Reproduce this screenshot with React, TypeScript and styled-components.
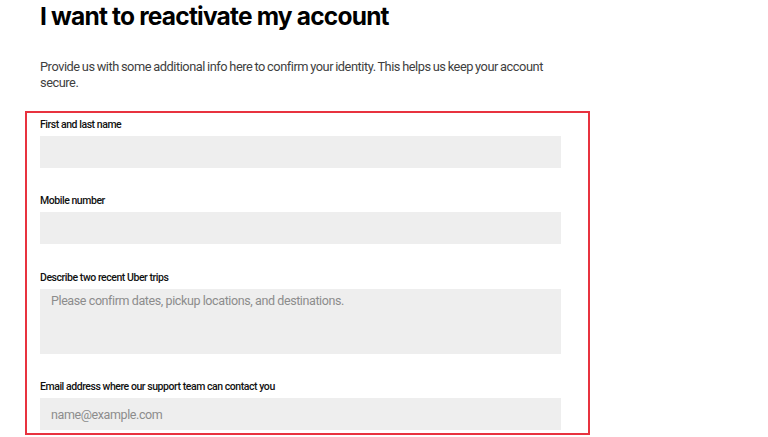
import React from 'react'
import styled, { createGlobalStyle } from 'styled-components'

const GlobalStyle = createGlobalStyle`
    html, body {
        margin: 0;
        padding: 0;
        background: #fff;
    }
    body {
        font-family: Roboto, 'Liberation Sans', sans-serif;
        color: #000;
    }
`

const Page = styled.main`
    width: 768px;
    height: 437px;
    overflow: hidden;
    box-sizing: border-box;
    padding: 0 0 0 25px;
`

const Intro = styled.div`
    padding-left: 15px;
    width: 521px;
`

const Title = styled.h1`
    margin: 0;
    padding-top: 1px;
    font-family: Inter, 'Liberation Sans', sans-serif;
    font-size: 24.5px;
    line-height: 30px;
    font-weight: 700;
    letter-spacing: -0.8px;
    color: #000;
`

const Lead = styled.p`
    margin: 28px 0 0;
    font-size: 12.8px;
    line-height: 16px;
    color: #3f3f3f;
    letter-spacing: -0.45px;
    word-spacing: -0.6px;
`

const Highlight = styled.form`
    margin-top: 20px;
    width: 565px;
    box-sizing: border-box;
    border: 2px solid #e8323f;
    padding: 5px 27px 3px 13px;
    display: flex;
    flex-direction: column;
    gap: 26px;
`

const Field = styled.label<{ $tall?: boolean }>`
    display: flex;
    flex-direction: column;
    gap: 4px;
    margin-top: ${p => (p.$tall ? 1 : 0)}px;
`

const Caption = styled.span`
    font-size: 10.5px;
    line-height: 14px;
    font-weight: 500;
    letter-spacing: -0.45px;
    color: #111;
`

const Input = styled.input`
    box-sizing: border-box;
    width: 521px;
    height: 32px;
    border: none;
    outline: none;
    background: #eeeeee;
    padding: 0 11px;
    font-family: inherit;
    font-size: 12.5px;
    letter-spacing: -0.4px;
    color: #000;

    &::placeholder {
        color: #8c8c8c;
    }
`

const TextArea = styled.textarea`
    box-sizing: border-box;
    width: 521px;
    height: 65px;
    border: none;
    outline: none;
    resize: none;
    background: #eeeeee;
    padding: 4px 11px;
    font-family: inherit;
    font-size: 12.5px;
    line-height: 16px;
    letter-spacing: -0.4px;
    color: #000;

    &::placeholder {
        color: #8c8c8c;
    }
`

const App = () => (
    <>
        <GlobalStyle />
        <Page>
            <Intro>
                <Title>I want to reactivate my account</Title>
                <Lead>
                    Provide us with some additional info here to confirm your identity. This helps us keep your
                    account secure.
                </Lead>
            </Intro>
            <Highlight onSubmit={e => e.preventDefault()}>
                <Field>
                    <Caption>First and last name</Caption>
                    <Input type='text' />
                </Field>
                <Field>
                    <Caption>Mobile number</Caption>
                    <Input type='tel' />
                </Field>
                <Field $tall>
                    <Caption>Describe two recent Uber trips</Caption>
                    <TextArea placeholder='Please confirm dates, pickup locations, and destinations.' />
                </Field>
                <Field>
                    <Caption>Email address where our support team can contact you</Caption>
                    <Input type='email' placeholder='name@example.com' />
                </Field>
            </Highlight>
        </Page>
    </>
)

export default App
